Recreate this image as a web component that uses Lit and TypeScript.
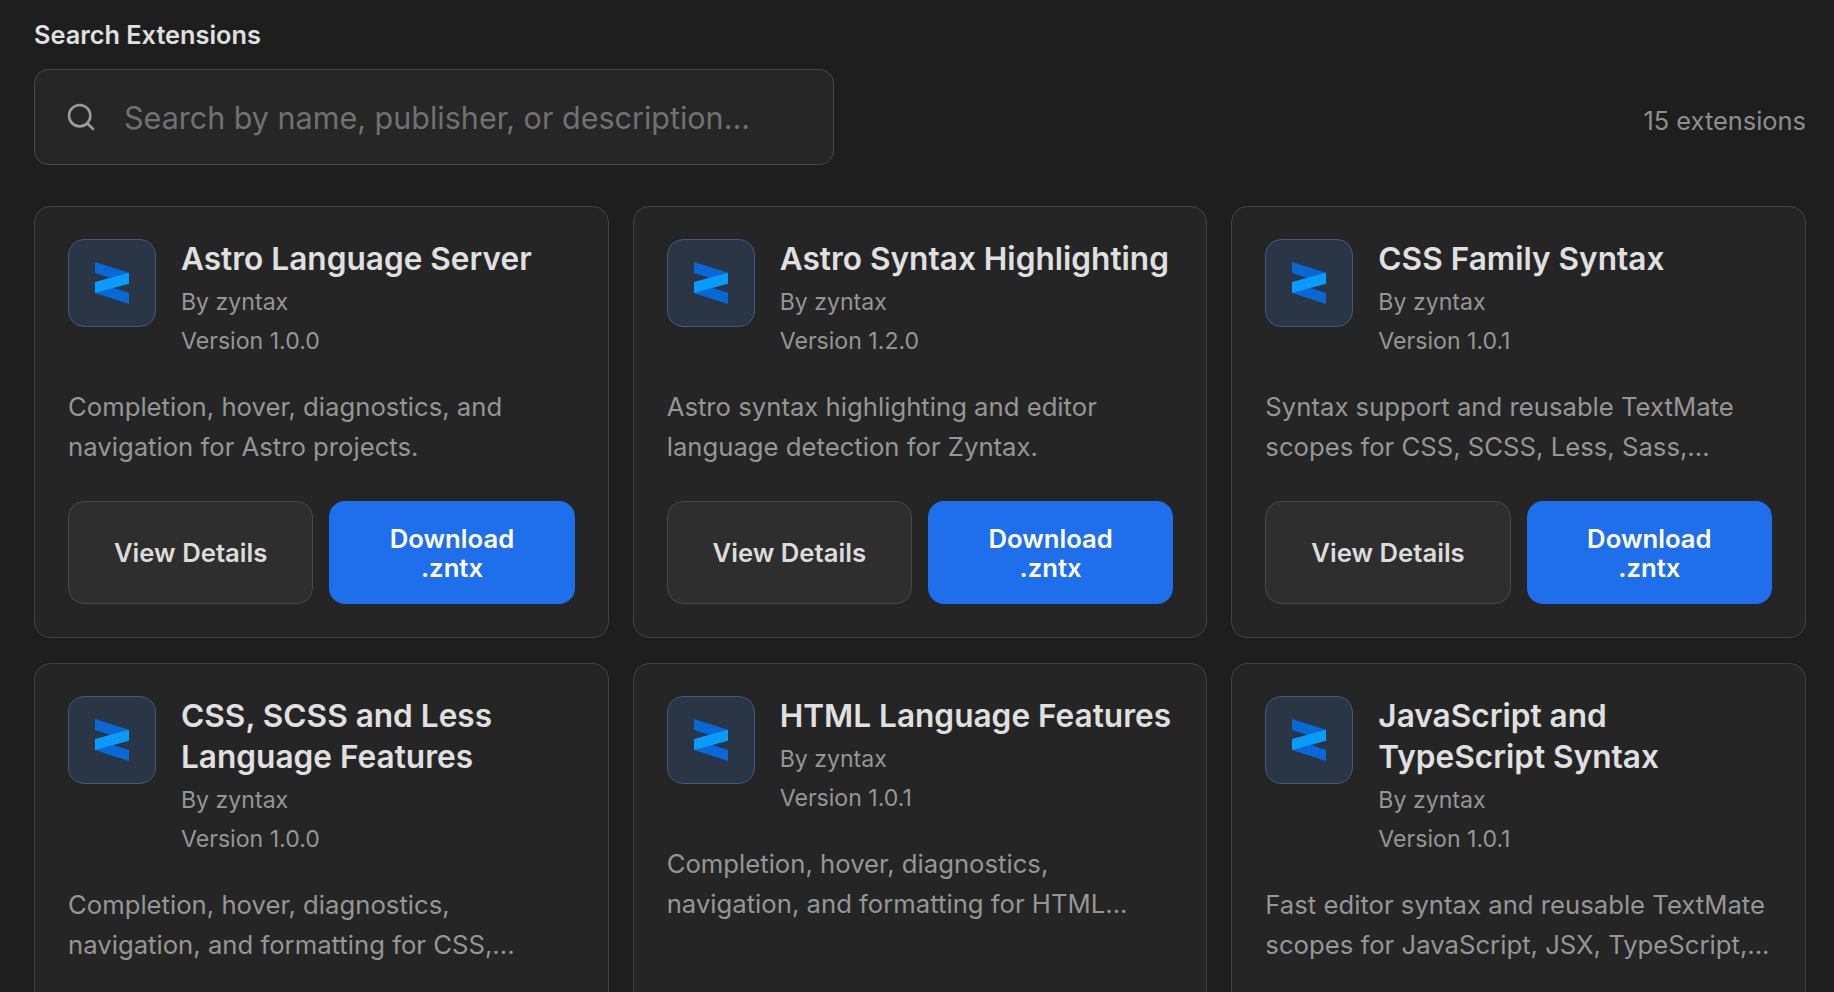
import { LitElement, html, css } from "lit";
import { customElement } from "lit/decorators.js";

const items = [
  ["Astro Language Server", "1.0.0", "Completion, hover, diagnostics, and navigation for Astro projects."],
  ["Astro Syntax Highlighting", "1.2.0", "Astro syntax highlighting and editor language detection for Zyntax."],
  ["CSS Family Syntax", "1.0.1", "Syntax support and reusable TextMate scopes for CSS, SCSS, Less, Sass,..."],
  ["CSS, SCSS and Less Language Features", "1.0.0", "Completion, hover, diagnostics, navigation, and formatting for CSS,..."],
  ["HTML Language Features", "1.0.1", "Completion, hover, diagnostics, navigation, and formatting for HTML..."],
  ["JavaScript and TypeScript Syntax", "1.0.1", "Fast editor syntax and reusable TextMate scopes for JavaScript, JSX, TypeScript,..."],
];

@customElement("app-root")
export class AppRoot extends LitElement {
  static styles = css`
    :host { display: block; height: 992px; overflow: hidden; background: #1e1e1e; font-family: Inter, "Noto Sans", sans-serif; }
    * { box-sizing: border-box; }
    .page { padding: 22px 28px 0 34px; }
    .label { font-size: 25.3px; font-weight: 600; line-height: 26px; color: #e0e0e0; margin-bottom: 21px; }
    .top { display: flex; justify-content: space-between; align-items: center; margin-bottom: 41px; }
    .search { width: 800px; height: 96px; display: flex; align-items: center; gap: 27px; padding: 0 30px; background: #262626; border: 1.5px solid #484848; border-radius: 14px; }
    .search svg { flex: none; }
    .ph { font-size: 30.5px; color: #717171; white-space: nowrap; }
    .count { font-size: 25.4px; color: #8e8e8e; padding-top: 7px; }
    .grid { display: grid; grid-template-columns: repeat(3, 1fr); gap: 25px 24px; }
    .card { background: #252525; border: 1.5px solid #424242; border-radius: 16px; padding: 32px 33px 33px; display: flex; flex-direction: column; }
    .head { display: flex; gap: 25px; }
    .icon { flex: none; width: 88px; height: 88px; border-radius: 16px; background: #2a3545; border: 1.5px solid #3f5a80; display: flex; align-items: center; justify-content: center; }
    .text { margin-top: -1px; }
    .title { font-size: 31.6px; font-weight: 600; line-height: 41px; color: #e0e0e0; }
    .meta { font-size: 23.1px; line-height: 38.5px; color: #969696; }
    .by { margin-top: 4px; }
    .desc { font-size: 25.7px; line-height: 40px; color: #969696; margin-top: 27px; }
    .actions { display: grid; grid-template-columns: 1fr 1fr; gap: 16px; margin-top: auto; padding-top: 34px; }
    .btn { height: 103px; border-radius: 16px; font: 600 25.7px/29px Inter, sans-serif; display: flex; align-items: center; justify-content: center; text-align: center; }
    .view { background: #2e2e2e; border: 1.5px solid #484848; color: #dcdcdc; }
    .dl { background: #1f6fec; color: #fff; padding: 0 40px; }
  `;

  logo() {
    return html`<svg width="34" height="42" viewBox="0 0 34 42">
      <polygon points="0,0 34,10.7 34,21.7 0,11" fill="#0868d6" />
      <polygon points="0,31 34,42 34,31 0,20" fill="#0868d6" />
      <polygon points="34,10.7 34,21.7 0,31 0,20" fill="#0a9bff" />
    </svg>`;
  }

  render() {
    return html`<div class="page">
      <div class="label">Search Extensions</div>
      <div class="top">
        <div class="search">
          <svg width="32" height="32" viewBox="0 0 24 24" fill="none" stroke="#9a9a9a" stroke-width="2" stroke-linecap="round"><circle cx="11" cy="11" r="8"/><path d="m21 21-4.3-4.3"/></svg>
          <span class="ph">Search by name, publisher, or description...</span>
        </div>
        <div class="count">15 extensions</div>
      </div>
      <div class="grid">
        ${items.map(([t, v, d]) => html`<div class="card">
          <div class="head">
            <div class="icon">${this.logo()}</div>
            <div class="text">
              <div class="title">${t}</div>
              <div class="meta by">By zyntax</div>
              <div class="meta">Version ${v}</div>
            </div>
          </div>
          <div class="desc">${d}</div>
          <div class="actions">
            <div class="btn view">View Details</div>
            <div class="btn dl">Download .zntx</div>
          </div>
        </div>`)}
      </div>
    </div>`;
  }
}
